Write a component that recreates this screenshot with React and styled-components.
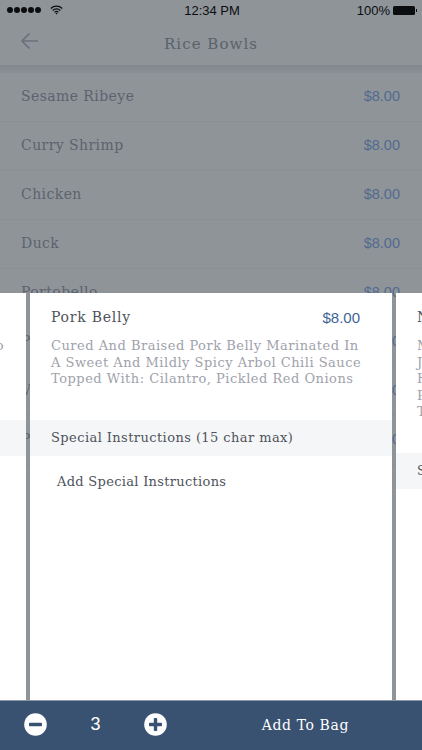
import React from 'react';
import styled, { createGlobalStyle } from 'styled-components';

const slab = '"DejaVu Serif", "Liberation Serif", serif';
const sans = '"Liberation Sans", Arial, sans-serif';

const GlobalStyle = createGlobalStyle`
  html, body { margin: 0; padding: 0; background: #fff; }
  * { box-sizing: border-box; }
`;

const Screen = styled.div`
  position: relative;
  width: 422px;
  height: 750px;
  overflow: hidden;
  display: flex;
  flex-direction: column;
  background: #8f9499;
`;

const StatusBar = styled.div`
  height: 20px;
  display: grid;
  grid-template-columns: 1fr auto 1fr;
  align-items: center;
  padding: 0 5px 0 7px;
  font: 13px ${sans};
  color: #0c0d0f;
`;

const Signal = styled.div`
  display: flex;
  align-items: center;
  gap: 9px;
`;

const Dots = styled.div`
  display: flex;
  gap: 1px;
`;

const Dot = styled.span`
  width: 6px;
  height: 6px;
  border-radius: 50%;
  background: #0c0d0f;
`;

const Battery = styled.div`
  display: flex;
  justify-content: flex-end;
  align-items: center;
  gap: 3px;
`;

const BatteryBody = styled.span`
  width: 22px;
  height: 9px;
  border-radius: 1.5px;
  background: #0c0d0f;
`;

const BatteryTip = styled.span`
  width: 1px;
  height: 3px;
  margin-left: -2px;
  background: #0c0d0f;
`;

const NavBar = styled.div`
  height: 45px;
  display: flex;
  align-items: center;
  justify-content: center;
  position: relative;
  padding-top: 2px;
  font: 15px ${slab};
  letter-spacing: 1.05px;
  color: #5a616c;
`;

const BackIcon = styled.svg`
  position: absolute;
  left: 20px;
  top: 12px;
`;

const NavShadow = styled.div`
  height: 8px;
  background: linear-gradient(#83888f, #8a8f95);
`;

const MenuList = styled.div`
  flex: 1;
  overflow: hidden;
`;

const MenuRow = styled.div`
  height: 49px;
  flex: none;
  display: flex;
  align-items: center;
  justify-content: space-between;
  padding: 0 22px 2px 21px;
  border-bottom: 1px solid #8b9095;
  font: 14px ${slab};
  letter-spacing: 0.42px;
  color: #5c636e;
`;

const RowPrice = styled.span`
  font: 14.5px ${sans};
  letter-spacing: 0;
  color: #526a8e;
`;

const Carousel = styled.div`
  position: absolute;
  left: 0;
  right: 0;
  top: 293px;
  bottom: 50px;
  display: flex;
  justify-content: center;
  gap: 4px;
`;

const Card = styled.div`
  flex: 0 0 362px;
  background: #fff;
  padding-top: 14px;
`;

const CardHead = styled.div`
  display: flex;
  justify-content: space-between;
  align-items: center;
  height: 20px;
  padding: 0 32px 0 21px;
  font: 14px ${slab};
  letter-spacing: 0.75px;
  color: #4e535b;
`;

const CardPrice = styled.span`
  font: 15px ${sans};
  letter-spacing: 0;
  color: #3f6596;
`;

const Description = styled.div`
  margin-top: 10px;
  padding: 1px 22px 0 21px;
  font: 13px/16.6px ${slab};
  letter-spacing: 0.5px;
  color: #9ea2ab;
`;

const Line = styled.div`
  white-space: nowrap;
  text-align: ${p => (p.$end ? 'right' : 'left')};
`;

const SpecialHead = styled.div`
  height: 36px;
  margin-top: 32px;
  display: flex;
  align-items: center;
  padding-left: 21px;
  background: #f5f6f8;
  font: 13px ${slab};
  letter-spacing: 0.42px;
  color: #4e535b;
`;

const SpecialInput = styled.div`
  padding: 18px 0 0 27px;
  font: 13px ${slab};
  letter-spacing: 0.3px;
  color: #4e535b;
`;

const Footer = styled.div`
  position: relative;
  height: 50px;
  flex: none;
  display: flex;
  align-items: center;
  padding: 0 73px 2px 24px;
  background: #3a5272;
  border-top: 1px solid #8c97a6;
  color: #fff;
`;

const RoundButton = styled.svg`
  flex: none;
  display: block;
`;

const Quantity = styled.span`
  width: 97px;
  text-align: center;
  font: 18px ${sans};
`;

const AddToBag = styled.span`
  margin-left: auto;
  font: 14px ${slab};
  letter-spacing: 0.6px;
`;

const rows = [
  ['Sesame Ribeye', '$8.00'],
  ['Curry Shrimp', '$8.00'],
  ['Chicken', '$8.00'],
  ['Duck', '$8.00'],
  ['Portobello', '$8.00'],
  ['Pork Belly', '$8.00'],
  ['Veggie', '$8.00'],
  ['Pork Belly', '$8.00'],
];

const ItemCard = ({ name, price, lines, endFirst }) => (
  <Card>
    <CardHead>
      <span>{name}</span>
      <CardPrice>{price}</CardPrice>
    </CardHead>
    <Description>
      {lines.map((line, i) => (
        <Line key={i} $end={endFirst && i === 0}>
          {line}
        </Line>
      ))}
    </Description>
    <SpecialHead>Special Instructions (15 char max)</SpecialHead>
    <SpecialInput>Add Special Instructions</SpecialInput>
  </Card>
);

const CircleIcon = ({ plus }) => (
  <RoundButton width="23" height="23" viewBox="0 0 23 23">
    <circle cx="11.5" cy="11.5" r="11.3" fill="#fff" />
    <rect x="5" y="9.8" width="13" height="3.4" rx="0.8" fill="#3a5272" />
    {plus && <rect x="9.8" y="5" width="3.4" height="13" rx="0.8" fill="#3a5272" />}
  </RoundButton>
);

export default function App() {
  return (
    <Screen>
      <GlobalStyle />
      <StatusBar>
        <Signal>
          <Dots>
            {[0, 1, 2, 3, 4].map(i => (
              <Dot key={i} />
            ))}
          </Dots>
          <svg width="13" height="10" viewBox="0 0 16 12">
            <path d="M1 4.2a10 10 0 0 1 14 0M3.3 6.6a6.8 6.8 0 0 1 9.4 0M5.6 8.9a3.4 3.4 0 0 1 4.8 0" fill="none" stroke="#0c0d0f" strokeWidth="1.5" />
            <path d="M6.7 10.1a1.9 1.9 0 0 1 2.6 0L8 11.6z" fill="#0c0d0f" />
          </svg>
        </Signal>
        <span>12:34 PM</span>
        <Battery>
          <span>100%</span>
          <BatteryBody />
          <BatteryTip />
        </Battery>
      </StatusBar>
      <NavBar>
        <BackIcon width="19" height="18" viewBox="0 0 19 18">
          <path d="M18 9H2M9.5 1.5L2 9l7.5 7.5" fill="none" stroke="#68707c" strokeWidth="1.6" />
        </BackIcon>
        Rice Bowls
      </NavBar>
      <NavShadow />
      <MenuList>
        {rows.map(([name, price], i) => (
          <MenuRow key={i}>
            <span>{name}</span>
            <RowPrice>{price}</RowPrice>
          </MenuRow>
        ))}
      </MenuList>
      <Carousel>
        <ItemCard
          name="Veggie"
          price="$8.00"
          endFirst
          lines={['Grilled Tofu With Sesame And Miso', 'Topped With: Scallions', 'And Sprouts']}
        />
        <ItemCard
          name="Pork Belly"
          price="$8.00"
          lines={[
            'Cured And Braised Pork Belly Marinated In',
            'A Sweet And Mildly Spicy Arbol Chili Sauce',
            'Topped With: Cilantro, Pickled Red Onions',
          ]}
        />
        <ItemCard
          name="Nori"
          price="$8.00"
          lines={['Marinated Tofu', 'Jalapeno', 'Herbs', 'Pickles', 'Toasted Sesame']}
        />
      </Carousel>
      <Footer>
        <CircleIcon />
        <Quantity>3</Quantity>
        <CircleIcon plus />
        <AddToBag>Add To Bag</AddToBag>
      </Footer>
    </Screen>
  );
}
